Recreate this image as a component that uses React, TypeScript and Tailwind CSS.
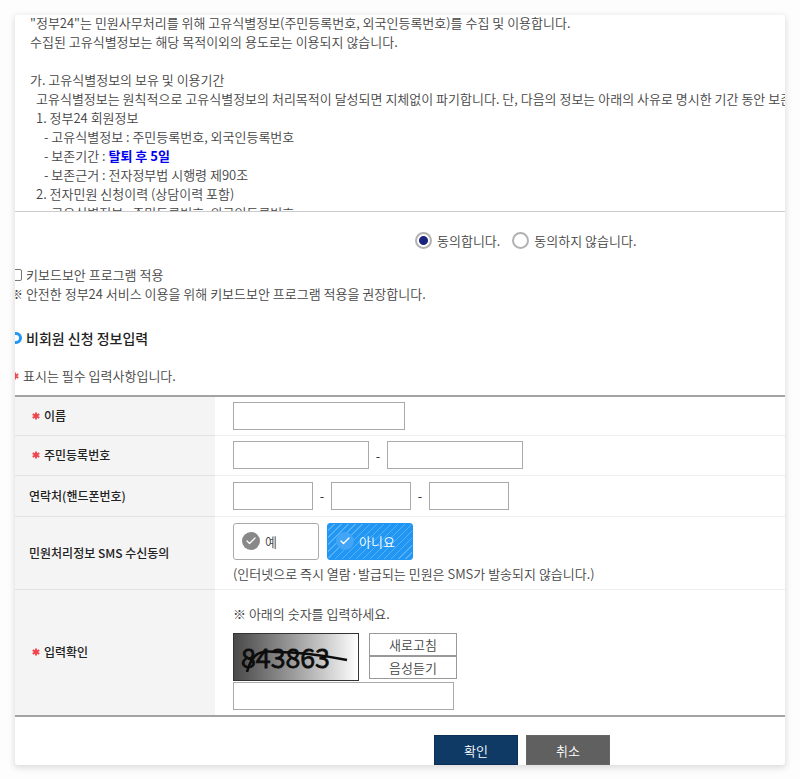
import { useState, type ReactNode } from "react";
import { Check } from "lucide-react";

const terms: { text: string; indent: string; strong?: string }[] = [
  { text: '"정부24"는 민원사무처리를 위해 고유식별정보(주민등록번호, 외국인등록번호)를 수집 및 이용합니다.', indent: "pl-0" },
  { text: "수집된 고유식별정보는 해당 목적이외의 용도로는 이용되지 않습니다.", indent: "pl-0" },
  { text: "", indent: "pl-0" },
  { text: "가. 고유식별정보의 보유 및 이용기간", indent: "pl-0" },
  { text: "고유식별정보는 원칙적으로 고유식별정보의 처리목적이 달성되면 지체없이 파기합니다. 단, 다음의 정보는 아래의 사유로 명시한 기간 동안 보존합니다.", indent: "pl-[6px]" },
  { text: "1. 정부24 회원정보", indent: "pl-[6px]" },
  { text: "- 고유식별정보 : 주민등록번호, 외국인등록번호", indent: "pl-[14px]" },
  { text: "- 보존기간 : ", indent: "pl-[14px]", strong: "탈퇴 후 5일" },
  { text: "- 보존근거 : 전자정부법 시행령 제90조", indent: "pl-[14px]" },
  { text: "2. 전자민원 신청이력 (상담이력 포함)", indent: "pl-[6px]" },
  { text: "- 고유식별정보 : 주민등록번호, 외국인등록번호", indent: "pl-[14px]" },
];

const field = "block h-7 border border-[#aaa] bg-white px-2 outline-none focus:border-[#2196f3]";

function Star() {
  return (
    <svg viewBox="0 0 8 8" className="h-2 w-2 shrink-0" aria-hidden="true">
      <path d="M4 0.4v7.2M0.7 2.1l6.6 3.8M7.3 2.1L0.7 5.9" stroke="#f0444c" strokeWidth="1.9" />
    </svg>
  );
}

function Row({ label, required, htmlFor, height, children }: { label: string; required?: boolean; htmlFor?: string; height: string; children: ReactNode }) {
  return (
    <tr className={height}>
      <th scope="row" className="w-[200px] border-b border-[#e2e2e2] bg-[#f4f4f4] pl-[14px] text-left text-xs font-medium text-[#222]">
        <span className={required ? "flex items-center gap-1 pl-[3px]" : "flex items-center"}>
          {required && <Star />}
          <label htmlFor={htmlFor}>{label}</label>
        </span>
      </th>
      <td className="border-b border-[#eee] pl-[18px]">{children}</td>
    </tr>
  );
}

function Dash() {
  return <span className="w-[18px] text-center text-[#222]">-</span>;
}

function AgreeRadio({ label, checked, onSelect }: { label: string; checked: boolean; onSelect: () => void }) {
  return (
    <label className="flex items-center gap-[5px]">
      <input
        type="radio"
        name="agree"
        checked={checked}
        onChange={onSelect}
        className="h-[17px] w-[17px] appearance-none rounded-full border-2 border-[#b2b2b2] bg-white checked:bg-[radial-gradient(circle,#1a237e_0_4px,#fff_5px)]"
      />
      {label}
    </label>
  );
}

function SmsOption({ label, checked, onSelect }: { label: string; checked: boolean; onSelect: () => void }) {
  return (
    <label
      className={
        "relative flex h-[37px] w-[86px] items-center gap-[5px] rounded-[3px] border pl-2 " +
        (checked
          ? "border-[#2196f3] bg-[repeating-linear-gradient(135deg,#2196f3_0_4px,#55b0f8_4px_5px)] text-white"
          : "border-[#aaa] bg-white")
      }
    >
      <input type="radio" name="sms" checked={checked} onChange={onSelect} className="sr-only" />
      <span className={"flex h-[18px] w-[18px] items-center justify-center rounded-full text-white " + (checked ? "bg-[#42a5f5]" : "bg-[#888]")}>
        <Check size={12} strokeWidth={2.5} />
      </span>
      {label}
    </label>
  );
}

export default function App() {
  const [agree, setAgree] = useState(true);
  const [sms, setSms] = useState(false);

  return (
    <div className="min-h-screen bg-[#fdfdfd] p-[15px] pb-3 font-['Noto_Sans_CJK_KR',sans-serif] text-[13px] leading-[19px] font-[350] text-[#444]">
      <main className="overflow-hidden rounded-[3px] bg-white shadow-[0_2px_6px_1px_rgba(0,0,0,0.13)]">
        <section className="h-[197px] overflow-hidden border-b border-[#ccc] pl-[15px] whitespace-nowrap">
          <div className="-mt-0.5">
            {terms.map((t, i) => (
              <p key={i} className={"h-[19px] " + t.indent}>
                {t.text}
                {t.strong && <strong className="font-bold text-[#0000f0]">{t.strong}</strong>}
              </p>
            ))}
          </div>
        </section>

        <fieldset className="flex gap-3 pt-[19px] pl-[400px] whitespace-nowrap">
          <AgreeRadio label="동의합니다." checked={agree} onSelect={() => setAgree(true)} />
          <AgreeRadio label="동의하지 않습니다." checked={!agree} onSelect={() => setAgree(false)} />
        </fieldset>

        <div className="-ml-[5px] pt-[15px]">
          <label className="flex items-center gap-1">
            <input type="checkbox" className="h-3 w-3 appearance-none rounded-[2px] border border-[#777] bg-white checked:bg-[#2196f3]" />
            키보드보안 프로그램 적용
          </label>
          <p>※ 안전한 정부24 서비스 이용을 위해 키보드보안 프로그램 적용을 권장합니다.</p>
          <h2 className="flex items-center gap-1 pt-[25px] text-sm leading-5 font-medium text-[#222]">
            <span className="h-3 w-3 rounded-full border-[3px] border-[#2196f3]" />
            비회원 신청 정보입력
          </h2>
          <p className="flex items-center gap-1 pt-[18px] pb-[10px] pl-px">
            <Star />
            표시는 필수 입력사항입니다.
          </p>
        </div>

        <table className="w-full border-collapse border-y-2 border-[#a3a3a3]">
          <tbody>
            <Row label="이름" required htmlFor="name" height="h-[39px]">
              <input id="name" className={field + " w-[172px]"} />
            </Row>
            <Row label="주민등록번호" required htmlFor="rrn" height="h-10">
              <div className="flex items-center">
                <input id="rrn" className={field + " w-[136px]"} />
                <Dash />
                <input aria-label="주민등록번호 뒷자리" type="password" className={field + " w-[136px]"} />
              </div>
            </Row>
            <Row label="연락처(핸드폰번호)" htmlFor="phone" height="h-[41px]">
              <div className="flex items-center">
                <input id="phone" className={field + " w-[80px]"} />
                <Dash />
                <input aria-label="가운데 번호" className={field + " w-[80px]"} />
                <Dash />
                <input aria-label="끝 번호" className={field + " w-[80px]"} />
              </div>
            </Row>
            <Row label="민원처리정보 SMS 수신동의" height="h-[73px]">
              <div className="flex gap-2">
                <SmsOption label="예" checked={sms} onSelect={() => setSms(true)} />
                <SmsOption label="아니요" checked={!sms} onSelect={() => setSms(false)} />
              </div>
              <p className="pt-1">(인터넷으로 즉시 열람·발급되는 민원은 SMS가 발송되지 않습니다.)</p>
            </Row>
            <Row label="입력확인" required htmlFor="captcha" height="h-[127px]">
              <p className="pt-[9px] pb-[10px]">※ 아래의 숫자를 입력하세요.</p>
              <div className="flex gap-[10px]">
                <div className="h-12 w-[126px] border border-[#333] bg-linear-to-r from-[#4a4a4a] to-white">
                  <svg viewBox="0 0 124 46" className="h-full w-full">
                    <text x="7" y="34" fontSize="27" fill="#0c0c0c" stroke="#0c0c0c" strokeWidth="0.8">
                      843863
                    </text>
                    <path d="M13 38Q15 29 21 22Q27 16 42 18Q72 18 113 26" fill="none" stroke="#0c0c0c" strokeWidth="2.6" />
                  </svg>
                </div>
                <div className="flex w-[88px] flex-col">
                  <button type="button" className="h-[23px] border border-[#999] bg-white">새로고침</button>
                  <button type="button" className="h-[23px] border border-[#999] bg-white">음성듣기</button>
                </div>
              </div>
              <input id="captcha" className={field + " mt-px w-[221px]"} />
            </Row>
          </tbody>
        </table>

        <div className="flex gap-2 pt-[18px] pl-[419px] text-white">
          <button type="button" className="h-[30px] w-[84px] border border-[#0b2f55] bg-[#0f3a66]">확인</button>
          <button type="button" className="h-[30px] w-[84px] border border-[#666] bg-[#606060]">취소</button>
        </div>
      </main>
    </div>
  );
}
